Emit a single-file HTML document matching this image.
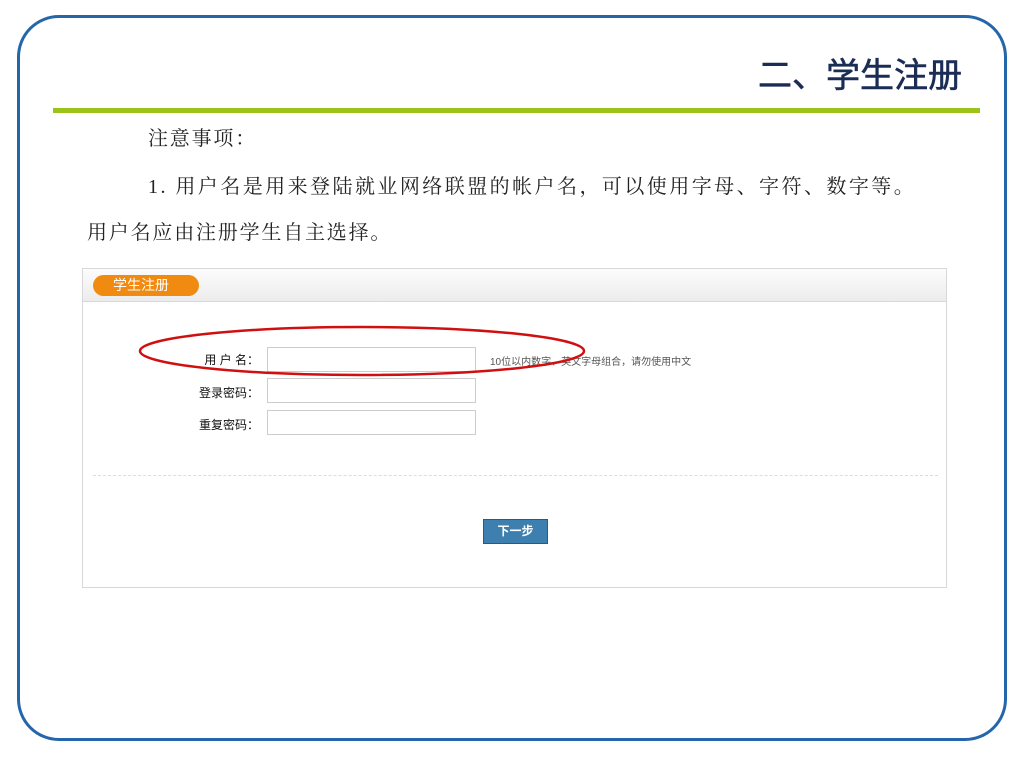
<!DOCTYPE html>
<html><head><meta charset="utf-8"><style>
body{margin:0;width:1024px;height:768px;background:#fff;position:relative;overflow:hidden;font-family:"Liberation Sans","Noto Sans CJK SC",sans-serif}
.frame{position:absolute;left:17px;top:15px;width:984px;height:720px;border:3px solid #2466aa;border-radius:42px}
.title{position:absolute;right:62px;top:48px;font-size:34px;color:#1b2c55;font-family:"Noto Sans CJK SC",sans-serif;font-weight:normal;-webkit-text-stroke:0.6px #1b2c55}
.green{position:absolute;left:53px;top:108px;width:927px;height:5px;background:#9cc31a}
.t{position:absolute;font-family:"Liberation Serif","Noto Serif CJK SC",serif;font-size:20px;color:#222;white-space:nowrap;letter-spacing:1.8px}
.box{position:absolute;left:82px;top:268px;width:863px;height:318px;border:1px solid #d8d8d8}
.hd{height:32px;background:linear-gradient(#fcfcfc,#ececec);border-bottom:1px solid #d8d8d8}
.pill{position:absolute;left:10px;top:6px;width:106px;height:21px;background:#f08a10;border-radius:11px;color:#fff;font-size:14px;line-height:21px;text-indent:20px}
.lb{position:absolute;font-size:12px;color:#111;width:80px;text-align:right}
.in{position:absolute;left:184px;width:207px;height:23px;border:1px solid #ccc}
.dash{position:absolute;left:10px;top:206px;width:845px;border-top:1px dashed #ddd}
.btn{position:absolute;left:400px;top:250px;width:63px;height:23px;background:#3d7fae;border:1px solid #2a5a80;color:#fff;font-size:12px;font-weight:bold;text-align:center;line-height:23px}
</style></head><body>
<div class="frame"></div>
<div class="title">二、学生注册</div>
<div class="green"></div>
<div class="t" style="left:148px;top:122px">注意事项：</div>
<div class="t" style="left:148px;top:170px;letter-spacing:2.45px">1. 用户名是用来登陆就业网络联盟的帐户名，可以使用字母、字符、数字等。</div>
<div class="t" style="left:87px;top:216px">用户名应由注册学生自主选择。</div>
<div class="box">
<div class="hd"></div>
<div class="pill">学生注册</div>
<div class="lb" style="left:96px;top:82px">用&nbsp;户&nbsp;名：</div>
<div class="in" style="top:78px"></div>
<div style="position:absolute;left:407px;top:84px;font-size:10px;color:#555">10位以内数字、英文字母组合，请勿使用中文</div>
<div class="lb" style="left:96px;top:115px">登录密码：</div>
<div class="in" style="top:109px"></div>
<div class="lb" style="left:96px;top:147px">重复密码：</div>
<div class="in" style="top:141px"></div>
<div class="dash"></div>
<div class="btn">下一步</div>
</div>
<svg style="position:absolute;left:0;top:0" width="1024" height="768"><ellipse cx="362" cy="351" rx="222" ry="24" fill="none" stroke="#d01010" stroke-width="2.5"/></svg>
</body></html>
